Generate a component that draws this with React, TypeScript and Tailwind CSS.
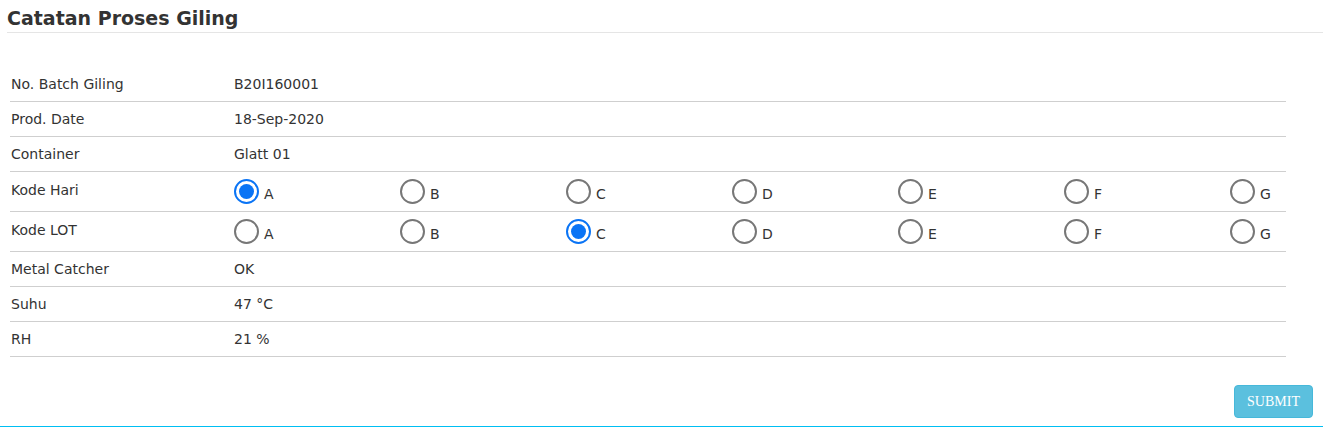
import React, { useState } from 'react';

const letters = ['A', 'B', 'C', 'D', 'E', 'F', 'G'];

const Radio: React.FC<{ checked: boolean; label: string; onPick: () => void }> = ({ checked, label, onPick }) => (
  <label className="flex items-start cursor-pointer" onClick={onPick}>
    <span
      className={`mt-[7px] w-[25px] h-[25px] rounded-full border-2 flex items-center justify-center shrink-0 ${
        checked ? 'border-[#0a74f5]' : 'border-[#777777]'
      }`}
    >
      {checked && <span className="w-[15px] h-[15px] rounded-full bg-[#0a74f5]" />}
    </span>
    <span className="ml-[5px] mt-[14px] leading-[16px]">{label}</span>
  </label>
);

const TextRow: React.FC<{ label: string; value: string }> = ({ label, value }) => (
  <div className="flex items-center h-[35px] border-b border-[#cfcfcf]">
    <div className="w-[224px] pl-px">{label}</div>
    <div>{value}</div>
  </div>
);

const RadioRow: React.FC<{ label: string; value: string; onChange: (v: string) => void }> = ({ label, value, onChange }) => (
  <div className="flex h-[40px] border-b border-[#cfcfcf]">
    <div className="w-[224px] pl-px pt-[10px] leading-[16px]">{label}</div>
    <div className="grid grid-cols-[repeat(6,166px)_auto]">
      {letters.map((l) => (
        <Radio key={l} label={l} checked={value === l} onPick={() => onChange(l)} />
      ))}
    </div>
  </div>
);

export default function App() {
  const [hari, setHari] = useState('A');
  const [lot, setLot] = useState('C');

  return (
    <div className="w-[1323px] h-[427px] bg-white text-[#333333] text-[14px] font-['DejaVu_Sans',Verdana,sans-serif] flex flex-col">
      <div className="ml-[7px] pt-[7px] pb-[2px] border-b border-[#e5e5e5]">
        <h1 className="text-[19px] leading-[23px] font-bold">Catatan Proses Giling</h1>
      </div>

      <div className="ml-[10px] w-[1276px] mt-[34px]">
        <TextRow label="No. Batch Giling" value="B20I160001" />
        <TextRow label="Prod. Date" value="18-Sep-2020" />
        <TextRow label="Container" value="Glatt 01" />
        <RadioRow label="Kode Hari" value={hari} onChange={setHari} />
        <RadioRow label="Kode LOT" value={lot} onChange={setLot} />
        <TextRow label="Metal Catcher" value="OK" />
        <TextRow label="Suhu" value="47 °C" />
        <TextRow label="RH" value="21 %" />
      </div>

      <div className="flex justify-end pr-[10px] mt-[28px]">
        <button className="w-[79px] h-[33px] rounded-[4px] bg-[#5bc0de] border border-[#46b8da] text-white text-[14px] font-['Liberation_Serif',serif]">
          SUBMIT
        </button>
      </div>

      <div className="mt-auto border-b border-[#00bff3]" />
    </div>
  );
}
